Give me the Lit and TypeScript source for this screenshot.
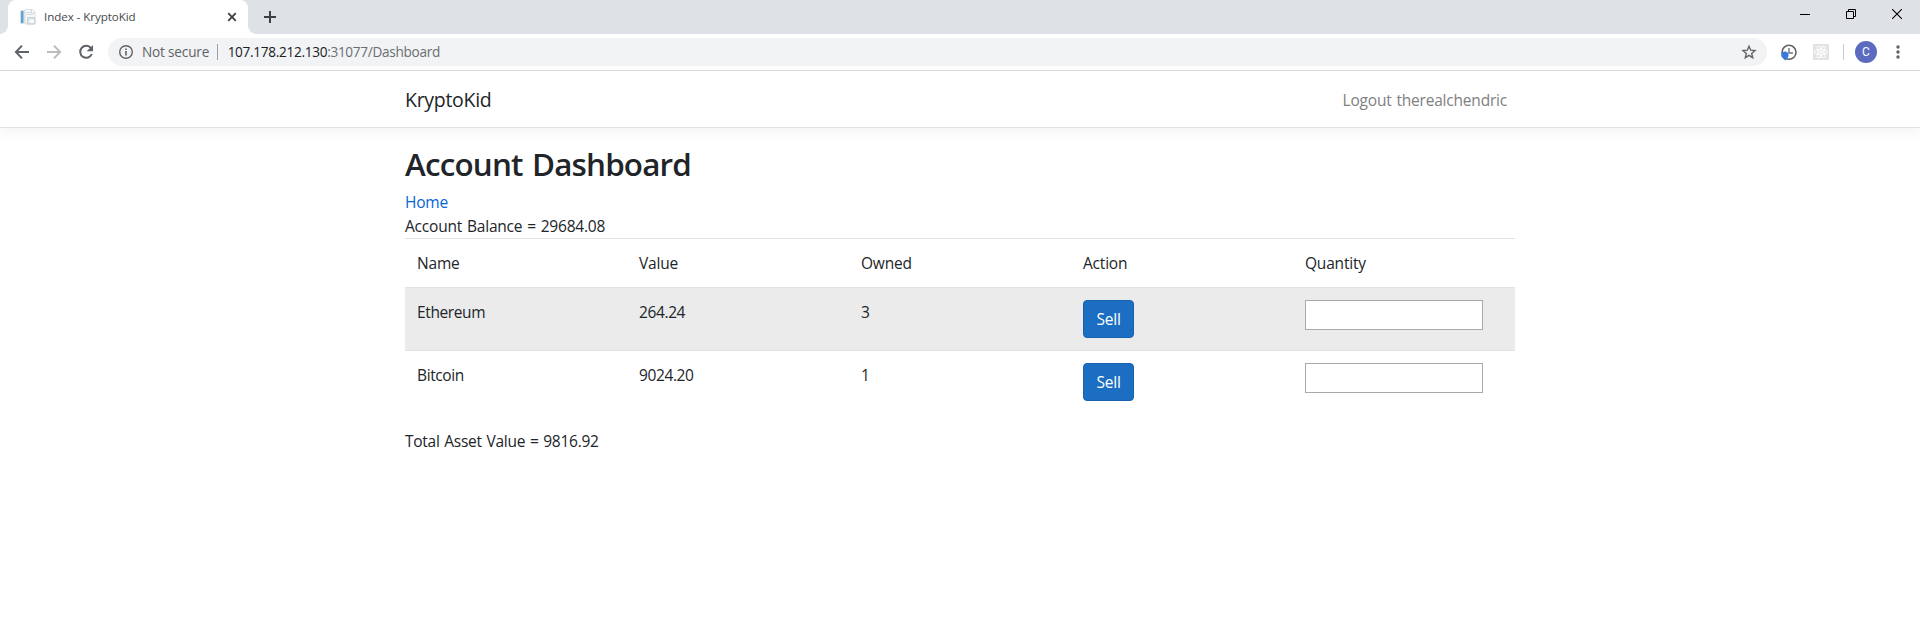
import { LitElement, html, css } from "lit";
import { customElement } from "lit/decorators.js";

@customElement("browser-chrome")
class BrowserChrome extends LitElement {
  static styles = css`
    :host { display: block; font-family: "Open Sans", "Noto Sans", sans-serif; }
    svg { display: block; flex: none; }
    span { white-space: nowrap; }
    .strip { height: 34px; background: #dee1e6; display: flex; align-items: stretch; }
    .tab { position: relative; margin-left: 8px; width: 240px; box-sizing: border-box; background: #fff; border-radius: 8px 8px 0 0; display: flex; align-items: center; padding: 0 10px 0 12px; }
    .tab::before, .tab::after { content: ""; position: absolute; bottom: 0; width: 8px; height: 8px; }
    .tab::before { left: -8px; background: radial-gradient(circle at 0 0, #dee1e6 7.5px, #fff 8px); }
    .tab::after { right: -8px; background: radial-gradient(circle at 100% 0, #dee1e6 7.5px, #fff 8px); }
    .title { flex: 1; margin-left: 7px; font-size: 11.6px; letter-spacing: -.07px; color: #45494d; line-height: 34px; }
    .plus { align-self: center; margin-left: 16px; }
    .controls { margin-left: auto; display: flex; gap: 36px; padding: 9px 18px 0 0; }
    .bar { height: 36px; display: flex; align-items: center; border-bottom: 1px solid #dadce0; background: #fff; padding-left: 12px; }
    .nav { display: flex; gap: 12px; width: 96px; }
    .omni { width: 1659px; height: 28px; border-radius: 14px; background: #f1f3f4; display: flex; align-items: center; box-sizing: border-box; padding: 0 10px; font-size: 13.6px; line-height: 28px; }
    .insecure { margin-left: 8px; color: #5f6368; letter-spacing: -.18px; }
    .sep { width: 1px; height: 16px; background: #9aa0a6; margin-left: 8px; }
    .url { margin-left: 9.5px; color: #202124; letter-spacing: -.3px; }
    .path { color: #6a6e73; }
    .star { margin-left: auto; }
    .clock { margin-left: 13px; }
    .react { margin-left: 16px; }
    .sep2 { width: 1px; height: 16px; background: #c8cbcf; margin-left: 14px; }
    .avatar { width: 22px; height: 22px; border-radius: 50%; background: #5c6bc0; margin-left: 11px; color: #fff; font: 12px/22px Roboto, sans-serif; text-align: center; }
    .dots { margin-left: 19px; }
  `;
  render() {
    return html`
      <div class="strip">
        <div class="tab">
          <svg width="17" height="16" viewBox="0 0 17 16">
            <path d="M5 .5h7.5l2.5 3V15H5z" fill="#f6f8fa" stroke="#d9dfe4"/>
            <path d="M11.5 .5v3.5h3.5" fill="#fff" stroke="#cfd6dc"/>
            <path d="M.5 1.5h4v13h-4z" fill="#e9ebed" stroke="#dfe2e4"/>
            <path d="M1 2h2.5v12H1z" fill="#5aa5d8"/>
            <path d="M6.5 3.5h4M6.5 5.5h6" stroke="#d3d9de"/>
            <path d="M7.5 8.5h7.5v6.5h-7.5z" fill="#dfe4e9" stroke="#c9d1d9"/><path d="M9.5 11h4.5v2.5h-4.5z" fill="#fff"/>
          </svg>
          <span class="title">Index - KryptoKid</span>
          <svg width="12" height="12" viewBox="0 0 12 12"><path d="M2.2 2.2l7.6 7.6M9.8 2.2l-7.6 7.6" stroke="#3c4043" stroke-width="1.8"/></svg>
        </div>
        <svg class="plus" width="12" height="12" viewBox="0 0 12 12"><path d="M6 0v12M0 6h12" stroke="#3c4043" stroke-width="2"/></svg>
        <div class="controls">
          <svg width="10" height="10" viewBox="0 0 10 10"><path d="M0 5.5h10" stroke="#000"/></svg>
          <svg width="10" height="10" viewBox="0 0 10 10"><path d="M.5 2.5h7v7h-7zM2.5 2.5v-2h7v7h-2" fill="none" stroke="#000"/></svg>
          <svg width="10" height="10" viewBox="0 0 10 10"><path d="M0 0l10 10M10 0L0 10" stroke="#000" stroke-width="1.1"/></svg>
        </div>
      </div>
      <div class="bar">
        <div class="nav">
          <svg width="20" height="20" viewBox="0 0 20 20"><path d="M17 10H4.5M10 3.6L3.9 10l6.1 6.4" fill="none" stroke="#5f6368" stroke-width="2"/></svg>
          <svg width="20" height="20" viewBox="0 0 20 20"><path d="M3 10h12.5M10 3.6l6.1 6.4-6.1 6.4" fill="none" stroke="#babcbe" stroke-width="2"/></svg>
          <svg width="20" height="20" viewBox="0 0 20 20"><path d="M15 6.2A6 6 0 1 0 15.8 12" fill="none" stroke="#5f6368" stroke-width="2"/><path d="M17 3v6.3h-6.3z" fill="#5f6368"/></svg>
        </div>
        <div class="omni">
          <svg width="16" height="16" viewBox="0 0 16 16"><circle cx="8" cy="8" r="6.3" fill="none" stroke="#5f6368" stroke-width="1.4"/><path d="M8 7v4.5M8 4.4v1.6" stroke="#5f6368" stroke-width="1.6"/></svg>
          <span class="insecure">Not secure</span><i class="sep"></i>
          <span class="url">107.178.212.130<span class="path">:31077/Dashboard</span></span>
          <svg class="star" width="16" height="16" viewBox="0 0 16 16"><path d="M8 2.2l1.7 4 4.3.4-3.3 2.8 1 4.3L8 11.4l-3.7 2.3 1-4.3L2 6.6l4.3-.4z" fill="none" stroke="#5f6368" stroke-width="1.4"/></svg>
        </div>
        <svg class="clock" width="17" height="17" viewBox="0 0 17 17"><circle cx="9" cy="8.3" r="7" fill="#fff" stroke="#5f6368" stroke-width="1.6"/><path d="M9 4v5h4" fill="none" stroke="#6f7378" stroke-width="1.4"/><path d="M4.9 7.5a3.7 3.7 0 0 1 3.7 3.7c0 2.2-1.8 3.3-3.2 5.3C3.6 14.5 1.2 13.3 1.2 11.2a3.7 3.7 0 0 1 3.7-3.7z" fill="#3c78dc"/></svg>
        <svg class="react" width="16" height="16" viewBox="0 0 16 16"><path d="M0 0h16v16H0z" fill="#e3e3e3"/><g fill="none" stroke="#fff" stroke-width=".9"><ellipse cx="8" cy="8" rx="6.5" ry="2.5"/><ellipse cx="8" cy="8" rx="6.5" ry="2.5" transform="rotate(60 8 8)"/><ellipse cx="8" cy="8" rx="6.5" ry="2.5" transform="rotate(120 8 8)"/></g><circle cx="8" cy="8" r="1.3" fill="#fff"/></svg>
        <i class="sep2"></i>
        <div class="avatar">C</div>
        <svg class="dots" width="4" height="14" viewBox="0 0 4 14"><g fill="#5f6368"><circle cx="2" cy="2" r="1.7"/><circle cx="2" cy="7" r="1.7"/><circle cx="2" cy="12" r="1.7"/></g></svg>
      </div>`;
  }
}

@customElement("app-root")
class AppRoot extends LitElement {
  static styles = css`
    :host { display: block; height: 619px; overflow: hidden; background: #fff; color: #212529; font: 15.5px/24px "Open Sans", "Noto Sans", sans-serif; letter-spacing: -.2px; word-spacing: 1px; }
    browser-chrome { letter-spacing: 0; word-spacing: 0; }
    .navbar { height: 56px; border-bottom: 1px solid #dee2e6; box-shadow: 0 4px 12px rgba(0,0,0,.05); background: #fff; }
    .container { width: 1110px; margin: 0 auto; }
    .navbar .container { display: flex; justify-content: space-between; align-items: center; height: 56px; }
    .brand { font-size: 19.5px; letter-spacing: -.3px; padding-top: 2px; }
    .logout { color: #808080; padding: 1px 8px 0 0; }
    h1 { margin: 17px 0 7px; font-size: 31.4px; line-height: 38px; font-weight: 600; letter-spacing: -.82px; word-spacing: 2px; }
    .home { color: #0366d6; }
    .row { display: grid; grid-template-columns: repeat(5, 222px); border-top: 1px solid #dee2e6; }
    .cell { padding: 12px; line-height: 24px; display: flex; align-items: flex-start; }
    .data { letter-spacing: -.38px; }
    .odd { background: #ebebeb; }
    button { width: 51px; height: 38px; box-sizing: border-box; border: 1px solid #1861ac; border-radius: 4px; background: #1b6ec2; color: #fff; font: inherit; letter-spacing: -.2px; padding: 0; }
    input { width: 178px; height: 30px; box-sizing: border-box; border: 1px solid #a9a9a9; background: #fff; padding: 0; margin: 0; }
    .total { margin-top: 16px; letter-spacing: -.27px; }
  `;
  rows = [["Ethereum", "264.24", "3"], ["Bitcoin", "9024.20", "1"]];
  render() {
    return html`
      <browser-chrome></browser-chrome>
      <div class="navbar"><div class="container"><span class="brand">KryptoKid</span><span class="logout">Logout therealchendric</span></div></div>
      <div class="container">
        <h1>Account Dashboard</h1>
        <div class="home">Home</div>
        <div>Account Balance = 29684.08</div>
        <div class="row">${["Name", "Value", "Owned", "Action", "Quantity"].map(t => html`<div class="cell">${t}</div>`)}</div>
        ${this.rows.map((r, i) => html`<div class="row ${i ? "" : "odd"}">${r.map(t => html`<div class="cell data">${t}</div>`)}
          <div class="cell"><button>Sell</button></div><div class="cell"><input></div></div>`)}
        <div class="total">Total Asset Value = 9816.92</div>
      </div>`;
  }
}
